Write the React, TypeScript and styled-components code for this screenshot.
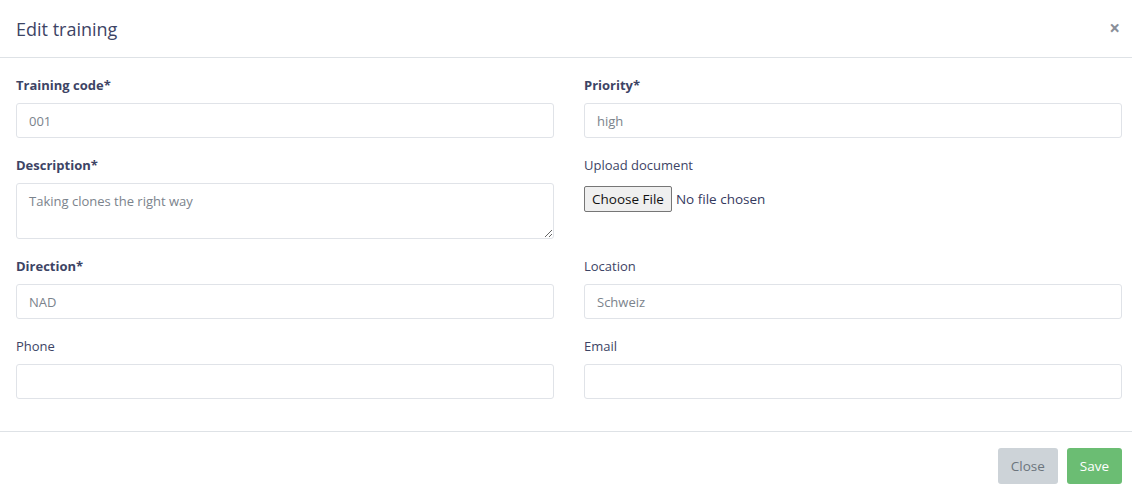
import styled, { createGlobalStyle } from "styled-components";

const GlobalStyle = createGlobalStyle`
  * { box-sizing: border-box; }
  html, body { overflow: hidden; }
  body {
    margin: 0;
    background: #fff;
    font-family: "Open Sans", "Noto Sans", sans-serif;
    color: #34395e;
  }
`;

type Field = {
  label: string;
  required?: boolean;
  value?: string;
  kind?: "input" | "textarea" | "file";
};

const leftFields: Field[] = [
  { label: "Training code", required: true, value: "001" },
  { label: "Description", required: true, value: "Taking clones the right way", kind: "textarea" },
  { label: "Direction", required: true, value: "NAD" },
  { label: "Phone", value: "" },
];

const rightFields: Field[] = [
  { label: "Priority", required: true, value: "high" },
  { label: "Upload document", kind: "file" },
  { label: "Location", value: "Schweiz" },
  { label: "Email", value: "" },
];

const renderField = (f: Field) => (
  <Group key={f.label} $tall={f.kind === "textarea" || f.kind === "file"}>
    <Label $bold={!!f.required}>
      {f.label}
      {f.required ? "*" : ""}
    </Label>
    {f.kind === "textarea" ? (
      <TextArea defaultValue={f.value} />
    ) : f.kind === "file" ? (
      <FileInput type="file" />
    ) : (
      <Input defaultValue={f.value} />
    )}
  </Group>
);

const App = () => (
  <>
    <GlobalStyle />
    <Modal>
      <Header>
        <Title>Edit training</Title>
        <CloseX>×</CloseX>
      </Header>
      <Body>
        <Column>{leftFields.map(renderField)}</Column>
        <Column>{rightFields.map(renderField)}</Column>
      </Body>
      <Footer>
        <Button $variant="secondary">Close</Button>
        <Button $variant="success">Save</Button>
      </Footer>
    </Modal>
  </>
);

export default App;

const Modal = styled.div`
  width: 100%;
  background: #fff;
`;

const Header = styled.div`
  height: 58px;
  padding: 0 16px;
  display: flex;
  align-items: center;
  justify-content: space-between;
  border-bottom: 1px solid #dee2e6;
`;

const Title = styled.h5`
  margin: 0;
  font-size: 18px;
  font-weight: 400;
  color: #3d4465;
`;

const CloseX = styled.span`
  font-size: 19px;
  font-weight: 700;
  color: #8a8f99;
  line-height: 1;
  margin-right: -4px;
`;

const Body = styled.div`
  padding: 18px 10px 14px 16px;
  display: grid;
  grid-template-columns: 1fr 1fr;
  column-gap: 30px;
  border-bottom: 1px solid #dee2e6;
`;

const Column = styled.div`
  display: flex;
  flex-direction: column;
`;

const Group = styled.div<{ $tall: boolean }>`
  margin-bottom: 18px;
  min-height: ${(p) => (p.$tall ? "83px" : "62px")};
`;

const Label = styled.label<{ $bold: boolean }>`
  display: block;
  font-size: 13px;
  line-height: 19px;
  margin-bottom: 8px;
  font-weight: ${(p) => (p.$bold ? 700 : 400)};
  color: #3d4465;
`;

const Input = styled.input`
  display: block;
  width: 100%;
  height: 35px;
  padding: 0 12px;
  border: 1px solid #e0e3e8;
  border-radius: 3px;
  font-family: inherit;
  font-size: 13px;
  color: #7b838c;
  background: #fff;
  outline: none;
`;

const TextArea = styled.textarea`
  display: block;
  width: 100%;
  height: 56px;
  padding: 8px 12px;
  border: 1px solid #e0e3e8;
  border-radius: 3px;
  font-family: inherit;
  font-size: 13px;
  color: #7b838c;
  resize: vertical;
  outline: none;
`;

const FileInput = styled.input`
  display: block;
  margin-top: 11px;
  font-family: "Open Sans", sans-serif;
  font-size: 13.5px;
  color: #34395e;

  &::file-selector-button {
    font-family: inherit;
    font-size: 13.5px;
    padding: 3px 7px;
    margin-right: 4px;
    border: 1px solid #767676;
    border-radius: 2px;
    background: #efefef;
    color: #111;
  }
`;

const Footer = styled.div`
  display: flex;
  justify-content: flex-end;
  gap: 9px;
  padding: 16px 10px 16px 16px;
`;

const Button = styled.button<{ $variant: "secondary" | "success" }>`
  height: 36px;
  padding: 0 13px;
  border: none;
  border-radius: 3px;
  font-family: inherit;
  font-size: 13.5px;
  background: ${(p) => (p.$variant === "success" ? "#6bbd73" : "#cdd3d8")};
  color: ${(p) => (p.$variant === "success" ? "#fff" : "#6c757d")};
`;
